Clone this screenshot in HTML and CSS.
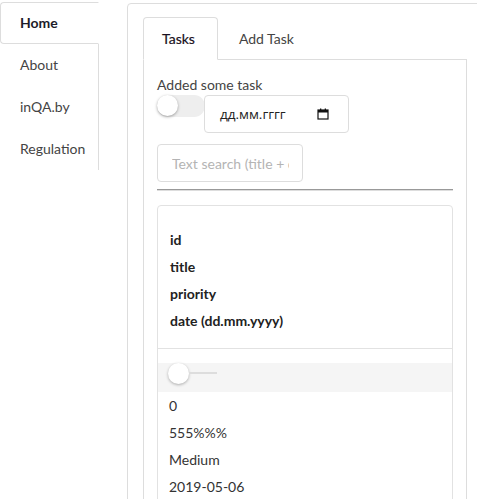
FILE: index.html
```html
<!DOCTYPE html>
<html lang="en">
<head>
<meta charset="utf-8">
<title>Tasks</title>
<link rel="stylesheet" href="styles.css">
</head>
<body>
<div class="layout">
  <ul class="side-nav">
    <li><a class="side-link active" href="#">Home</a></li>
    <li><a class="side-link" href="#">About</a></li>
    <li><a class="side-link" href="#">inQA.by</a></li>
    <li><a class="side-link" href="#">Regulation</a></li>
  </ul>
  <div class="panel">
    <ul class="tabs">
      <li><a class="tab active" href="#">Tasks</a></li>
      <li><a class="tab" href="#">Add Task</a></li>
    </ul>
    <div class="tab-content">
      <div class="label">Added some task</div>
      <div class="controls">
        <span class="switch"><span class="switch-knob"></span></span>
        <div class="date-input">
          <span class="date-text">дд.мм.гггг</span>
          <svg class="cal-icon" width="12" height="12" viewBox="0 0 12 12" aria-hidden="true">
            <rect x="1" y="2" width="10" height="9" fill="none" stroke="#111" stroke-width="1.2"/>
            <rect x="1" y="2" width="10" height="2.5" fill="#111"/>
            <rect x="3" y="0.5" width="1.3" height="2" fill="#111"/>
            <rect x="7.7" y="0.5" width="1.3" height="2" fill="#111"/>
          </svg>
        </div>
      </div>
      <input class="search" type="text" placeholder="Text search (title + description)">
      <hr class="divider">
      <div class="card">
        <div class="card-head">
          <div class="row bold">id</div>
          <div class="row bold">title</div>
          <div class="row bold">priority</div>
          <div class="row bold">date (dd.mm.yyyy)</div>
        </div>
        <div class="card-body">
          <div class="slider-band">
            <span class="slider-knob"></span>
            <span class="slider-track"></span>
          </div>
          <div class="row">0</div>
          <div class="row">555%%%</div>
          <div class="row">Medium</div>
          <div class="row">2019-05-06</div>
        </div>
      </div>
    </div>
  </div>
</div>
</body>
</html>
```
FILE: styles.css
```css
html, body {
  margin: 0;
  padding: 0;
  overflow: hidden;
  background: #fff;
}
body {
  font-family: Lato, "Open Sans", "Liberation Sans", sans-serif;
  font-size: 14px;
  color: #333;
}
.layout {
  display: flex;
  align-items: flex-start;
  gap: 28px;
}
.side-nav {
  list-style: none;
  margin: 2px 0 0 0;
  padding: 0;
  width: 98px;
  border-right: 1px solid #ddd;
  flex-shrink: 0;
}
.side-link {
  display: block;
  box-sizing: border-box;
  height: 42px;
  line-height: 40px;
  padding-left: 19px;
  border: 1px solid transparent;
  color: #444;
  text-decoration: none;
}
.side-link.active {
  border-color: #ddd;
  border-right-color: #fff;
  border-radius: 4px 0 0 4px;
  margin-right: -1px;
  background: #fff;
  color: #1c1c2a;
  font-weight: 700;
}
.panel {
  flex-shrink: 0;
  width: 324px;
  margin-top: 3px;
  border: 1px solid #ddd;
  border-radius: 4px;
  padding: 13px 15px 40px;
  min-height: 600px;
}
.tabs {
  list-style: none;
  margin: 0;
  padding: 0;
  display: flex;
  gap: 2px;
  border-bottom: 1px solid #ddd;
}
.tabs li {
  margin-bottom: -1px;
}
.tab {
  display: block;
  line-height: 41px;
  padding: 0 22px 0 18px;
  border: 1px solid transparent;
  border-radius: 4px 4px 0 0;
  color: #444;
  text-decoration: none;
}
.tab.active {
  border-color: #ddd #ddd #fff;
  color: #1a1020;
  -webkit-text-stroke: 0.2px #1a1020;
}
.tab-content {
  border: 1px solid #ddd;
  border-top: 0;
  padding: 14px 13px 40px;
  min-height: 500px;
}
.label {
  line-height: 21px;
  color: #444;
}
.controls {
  display: flex;
  align-items: flex-start;
}
.switch {
  position: relative;
  display: block;
  width: 48px;
  height: 22px;
  border-radius: 11px;
  background: #eee;
  flex-shrink: 0;
  margin-right: -1px;
}
.switch-knob {
  position: absolute;
  left: 0;
  top: 0;
  width: 21px;
  height: 21px;
  border-radius: 50%;
  background: #fff;
  box-shadow: 0 1px 3px rgba(0, 0, 0, 0.35);
}
.date-input {
  position: relative;
  box-sizing: border-box;
  width: 145px;
  height: 38px;
  border: 1px solid #ddd;
  border-radius: 4px;
  background: #fff;
  display: flex;
  align-items: center;
  justify-content: space-between;
  padding: 0 19px 0 15px;
}
.date-text {
  font-family: "Open Sans", "Liberation Sans", sans-serif;
  font-size: 13.5px;
  color: #222;
}
.cal-icon {
  display: block;
}
.search {
  display: block;
  box-sizing: border-box;
  width: 146px;
  height: 38px;
  margin-top: 11px;
  padding: 0 13px 0 14px;
  border: 1px solid #ddd;
  border-radius: 4px;
  font-family: Lato, "Open Sans", "Liberation Sans", sans-serif;
  font-size: 14px;
  color: #333;
  outline: none;
}
.search::placeholder {
  color: #b4b4b4;
}
.divider {
  margin: 7px 0 14px;
  border: 0;
  border-top: 1px solid #999;
  border-bottom: 1px solid #ddd;
  height: 0;
}
.card {
  border: 1px solid #e2e2e2;
  border-radius: 4px;
}
.card-head {
  padding: 20px 12px 14px;
  border-bottom: 1px solid #e2e2e2;
}
.row {
  line-height: 27px;
  padding: 0 11px;
}
.card-head .row {
  padding: 0;
}
.bold {
  font-weight: 700;
  color: #222;
}
.card-body {
  padding: 14px 0 20px;
}
.slider-band {
  display: flex;
  align-items: flex-start;
  height: 29px;
  background: #f5f5f5;
  padding-left: 10px;
}
.slider-knob {
  display: block;
  width: 21px;
  height: 21px;
  border-radius: 50%;
  background: #fff;
  box-shadow: 0 1px 3px rgba(0, 0, 0, 0.3);
  flex-shrink: 0;
}
.slider-track {
  display: block;
  width: 28px;
  height: 2px;
  margin-top: 9px;
  background: #ddd;
}
```
